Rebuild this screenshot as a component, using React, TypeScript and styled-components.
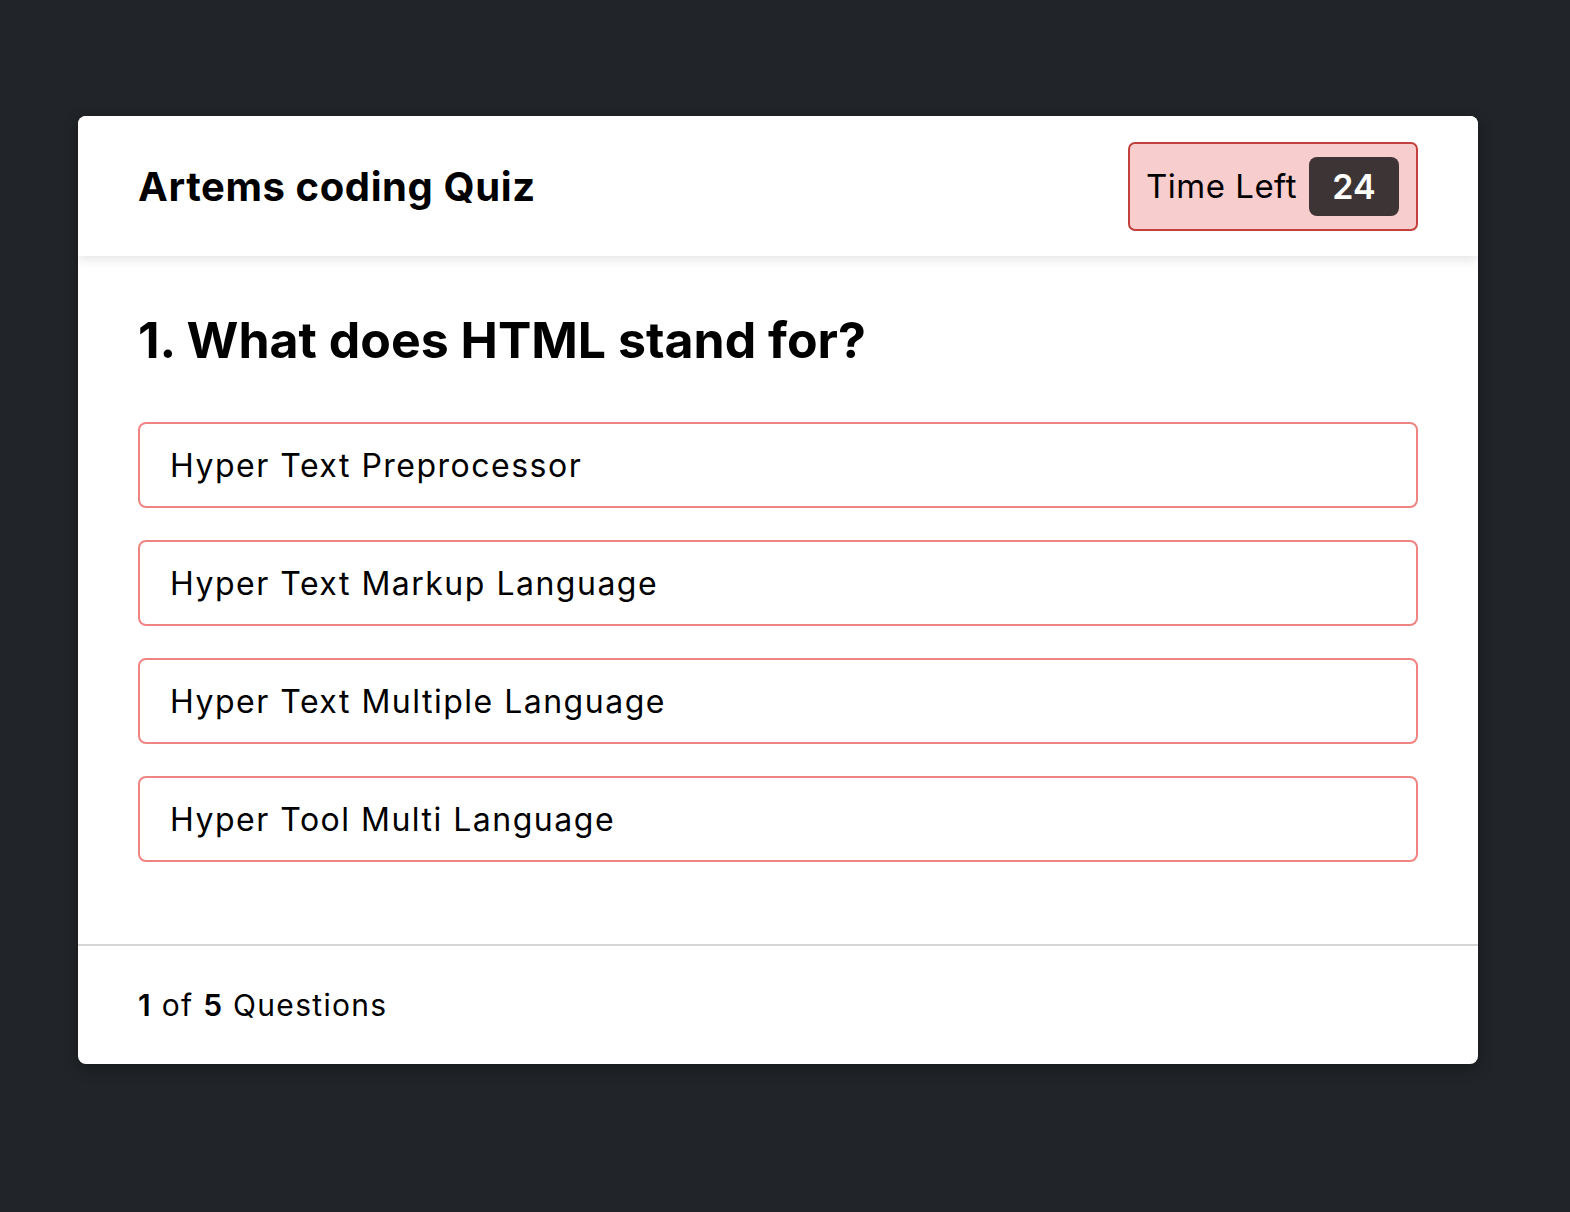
import React from "react";
import styled, { createGlobalStyle } from "styled-components";

const Global = createGlobalStyle`
  html, body { margin: 0; padding: 0; background: #212428; }
  body { font-family: "Inter", "Open Sans", sans-serif; color: #000; }
  * { box-sizing: border-box; }
`;

const Page = styled.div`
  min-height: 1212px;
  padding: 116px 92px 0 78px;
`;

const Card = styled.div`
  width: 1400px;
  background: #fff;
  border-radius: 8px;
  overflow: hidden;
  box-shadow: 0 4px 14px rgba(0, 0, 0, 0.35);
`;

const Header = styled.header`
  position: relative;
  z-index: 1;
  height: 140px;
  padding: 0 60px;
  display: flex;
  align-items: center;
  justify-content: space-between;
  background: #fff;
  box-shadow: 0 4px 10px rgba(0, 0, 0, 0.1);
`;

const Title = styled.h1`
  margin: 0;
  font-size: 40px;
  font-weight: 700;
  letter-spacing: 0.6px;
`;

const Timer = styled.div`
  width: 290px;
  height: 89px;
  padding: 0 17px 0 16px;
  display: flex;
  align-items: center;
  justify-content: space-between;
  background: #f8cdcd;
  border: 2px solid #c2403d;
  border-radius: 7px;
`;

const TimerLabel = styled.span`
  font-size: 33px;
  font-weight: 400;
  letter-spacing: 0.5px;
`;

const TimerValue = styled.span`
  width: 90px;
  height: 59px;
  display: flex;
  align-items: center;
  justify-content: center;
  background: #3d3535;
  color: #fff;
  border-radius: 8px;
  font-size: 34px;
  font-weight: 600;
`;

const Body = styled.section`
  padding: 54px 60px 82px;
`;

const Question = styled.h2`
  margin: 0 0 52px;
  font-size: 50px;
  font-weight: 700;
  line-height: 1.2;
`;

const Options = styled.ul`
  list-style: none;
  margin: 0;
  padding: 0;
  display: flex;
  flex-direction: column;
  gap: 32px;
`;

const Option = styled.li`
  height: 86px;
  padding: 0 30px;
  display: flex;
  align-items: center;
  border: 2px solid #ef8582;
  border-radius: 8px;
  font-size: 32px;
  font-weight: 400;
  letter-spacing: 1.5px;
`;

const Footer = styled.footer`
  height: 120px;
  padding: 0 60px;
  display: flex;
  align-items: center;
  border-top: 2px solid #d6d6d6;
  font-size: 30px;
  letter-spacing: 1.3px;
`;

const Strong = styled.b`
  font-weight: 600;
`;

const options = [
  "Hyper Text Preprocessor",
  "Hyper Text Markup Language",
  "Hyper Text Multiple Language",
  "Hyper Tool Multi Language",
];

export default function App() {
  return (
    <>
      <Global />
      <Page>
        <Card>
          <Header>
            <Title>Artems coding Quiz</Title>
            <Timer>
              <TimerLabel>Time Left</TimerLabel>
              <TimerValue>24</TimerValue>
            </Timer>
          </Header>
          <Body>
            <Question>1. What does HTML stand for?</Question>
            <Options>
              {options.map((o) => (
                <Option key={o}>{o}</Option>
              ))}
            </Options>
          </Body>
          <Footer>
            <span>
              <Strong>1</Strong> of <Strong>5</Strong> Questions
            </span>
          </Footer>
        </Card>
      </Page>
    </>
  );
}
